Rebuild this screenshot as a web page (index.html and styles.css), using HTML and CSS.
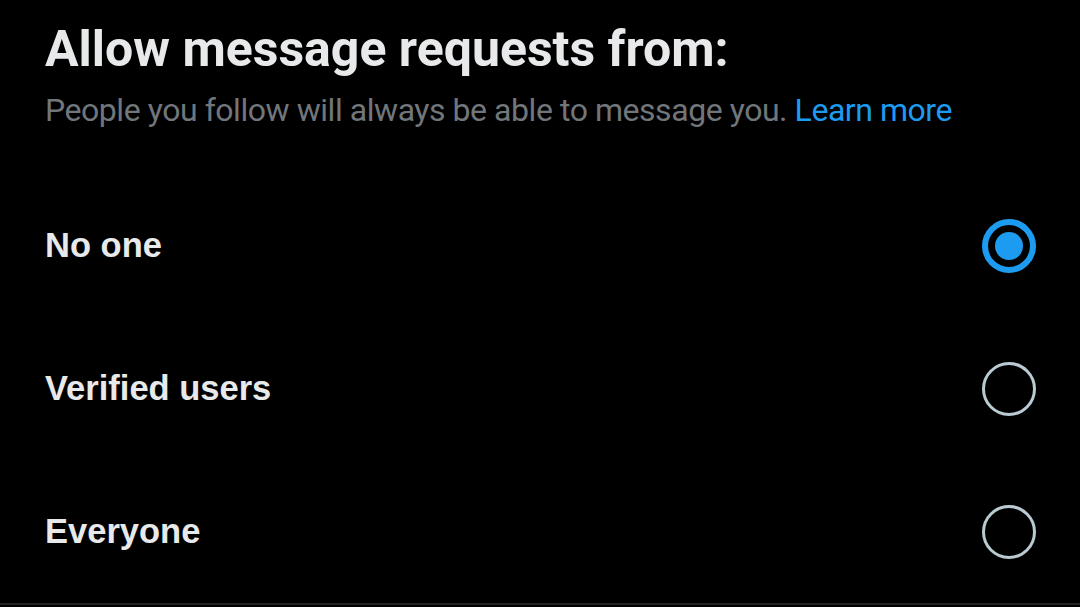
FILE: index.html
```html
<!DOCTYPE html>
<html lang="en">
<head>
  <meta charset="UTF-8">
  <meta name="viewport" content="width=device-width, initial-scale=1.0">
  <title>Message requests</title>
  <link rel="stylesheet" href="styles.css">
</head>
<body>
  <div class="container">
    <div class="header">
      <div class="header-title">Allow message requests from:</div>
      <div class="header-subtitle">People you follow will always be able to message you. <a href="#" class="learn-more">Learn more</a></div>
    </div>
    <div class="options">
      <label class="option-row">
        <span class="option-label">No one</span>
        <span class="radio radio-checked"><span class="radio-dot"></span></span>
      </label>
      <label class="option-row">
        <span class="option-label">Verified users</span>
        <span class="radio"></span>
      </label>
      <label class="option-row">
        <span class="option-label">Everyone</span>
        <span class="radio"></span>
      </label>
    </div>
  </div>
  <div class="bottom-line"></div>
</body>
</html>
```

FILE: styles.css
```css
body {
  background-color: #000000;
  color: #e7e9ea;
  font-family: Roboto, "Liberation Sans", Arial, sans-serif;
  margin: 0;
  padding: 0;
  height: 607px;
  display: flex;
  flex-direction: column;
  overflow: hidden;
}

.container {
  flex: 1;
  display: flex;
  flex-direction: column;
  padding: 0 44px 0 45px;
}

.header {
  padding-top: 20px;
}

.header-title {
  font-size: 50px;
  font-weight: 700;
  line-height: 58px;
}

.header-subtitle {
  font-size: 32px;
  font-weight: 400;
  color: #71767b;
  letter-spacing: -0.45px;
  line-height: 44px;
  margin-top: 10px;
}

.learn-more {
  color: #1d9bf0;
  text-decoration: none;
}

.options {
  display: flex;
  flex-direction: column;
  margin-top: 42px;
}

.option-row {
  display: flex;
  justify-content: space-between;
  align-items: center;
  height: 143px;
  cursor: pointer;
}

.option-label {
  font-family: "Liberation Sans", Arial, sans-serif;
  font-size: 34.5px;
  font-weight: 700;
}

.radio {
  width: 48px;
  height: 48px;
  border: 3px solid #b9cad3;
  border-radius: 50%;
  display: flex;
  align-items: center;
  justify-content: center;
}

.radio-checked {
  width: 42px;
  height: 42px;
  border: 6px solid #1d9bf0;
}

.radio-dot {
  width: 28px;
  height: 28px;
  border-radius: 50%;
  background-color: #1d9bf0;
}

.bottom-line {
  height: 3px;
  background-color: #222222;
  margin-bottom: 2px;
}
```
